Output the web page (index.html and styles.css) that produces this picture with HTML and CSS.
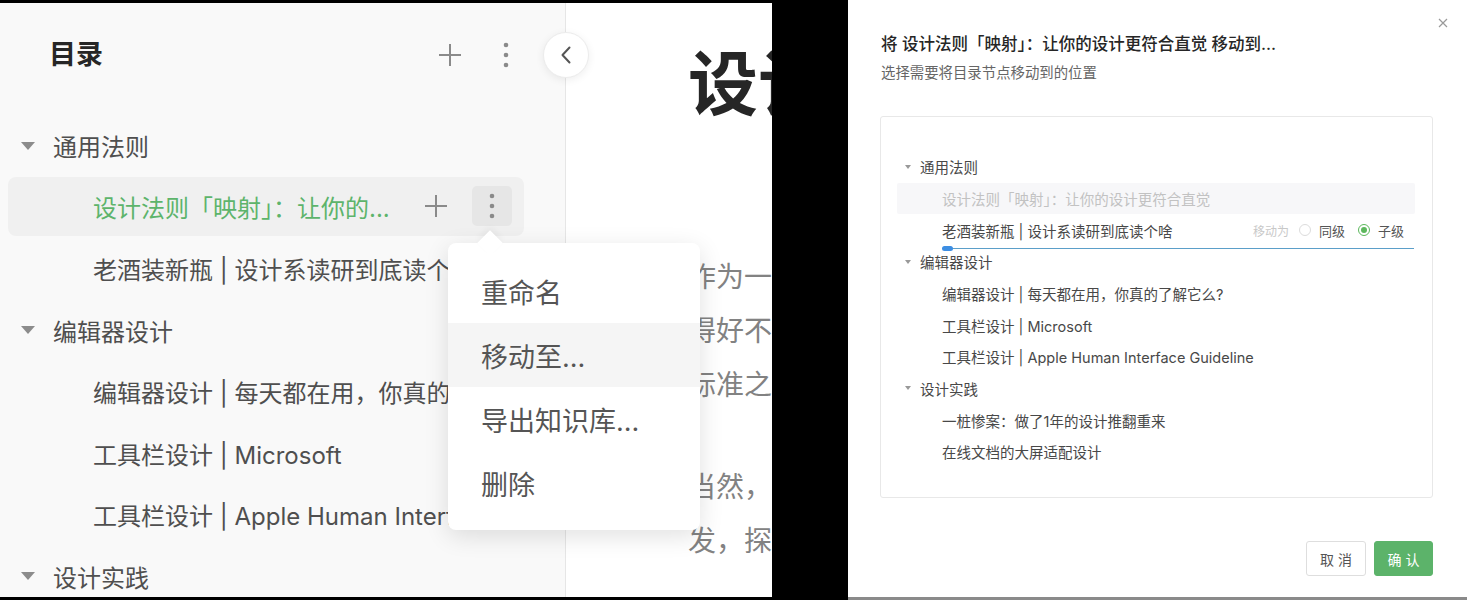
FILE: index.html
```html
<!DOCTYPE html>
<html lang="zh-CN">
<head>
<meta charset="utf-8">
<title>目录</title>
<link rel="stylesheet" href="styles.css">
</head>
<body>
<div class="screen">
  <div class="app">
    <aside class="sidebar">
      <header class="side-head">
        <h1 class="side-title">目录</h1>
        <div class="head-actions">
          <span class="icon-btn">
            <svg width="22" height="22" viewBox="0 0 22 22"><path d="M11 0v22M0 11h22" stroke="#8a8a8a" stroke-width="2" fill="none"/></svg>
          </span>
          <span class="icon-btn">
            <svg width="6" height="26" viewBox="0 0 6 26"><circle cx="3" cy="3" r="2.3" fill="#8a8a8a"/><circle cx="3" cy="13" r="2.3" fill="#8a8a8a"/><circle cx="3" cy="23" r="2.3" fill="#8a8a8a"/></svg>
          </span>
        </div>
      </header>
      <ul class="toc">
        <li class="toc-row group"><span class="caret"></span><span class="label">通用法则</span></li>
        <li class="toc-row child active">
          <span class="label">设计法则「映射」：让你的...</span>
          <span class="row-actions">
            <span class="icon-btn">
              <svg width="22" height="22" viewBox="0 0 22 22"><path d="M11 0v22M0 11h22" stroke="#8a8a8a" stroke-width="2" fill="none"/></svg>
            </span>
            <span class="more-btn">
              <svg width="6" height="26" viewBox="0 0 6 26"><circle cx="3" cy="3" r="2.3" fill="#8a8a8a"/><circle cx="3" cy="13" r="2.3" fill="#8a8a8a"/><circle cx="3" cy="23" r="2.3" fill="#8a8a8a"/></svg>
            </span>
          </span>
        </li>
        <li class="toc-row child"><span class="label">老酒装新瓶 | 设计系读研到底读个啥</span></li>
        <li class="toc-row group"><span class="caret"></span><span class="label">编辑器设计</span></li>
        <li class="toc-row child"><span class="label">编辑器设计 | 每天都在用，你真的了解它么?</span></li>
        <li class="toc-row child"><span class="label">工具栏设计 | Microsoft</span></li>
        <li class="toc-row child"><span class="label">工具栏设计 | Apple Human Interface Guideline</span></li>
        <li class="toc-row group"><span class="caret"></span><span class="label">设计实践</span></li>
      </ul>
    </aside>
    <main class="content">
      <h2 class="doc-title">设计法则「映射」：让你的设计更符合直觉</h2>
      <div class="doc-para">
        <div class="line">作为一名设计师，我们常常会被问到</div>
        <div class="line">得好不好，有没有一个可以衡量的</div>
        <div class="line">标准之类的问题。</div>
      </div>
      <div class="doc-para">
        <div class="line">当然，我们可以从很多角度出</div>
        <div class="line">发，探讨设计的好坏。</div>
      </div>
    </main>
    <button class="collapse-btn" type="button">
      <svg width="12" height="18" viewBox="0 0 12 18"><path d="M9.5 1.5L2.5 9l7 7.5" stroke="#555" stroke-width="2" fill="none" stroke-linecap="round" stroke-linejoin="round"/></svg>
    </button>
    <div class="menu">
      <div class="menu-item">重命名</div>
      <div class="menu-item hover">移动至...</div>
      <div class="menu-item">导出知识库...</div>
      <div class="menu-item">删除</div>
    </div>
  </div>
  <div class="gap"></div>
  <section class="modal">
    <span class="close">
      <svg width="10" height="10" viewBox="0 0 10 10"><path d="M1 1l8 8M9 1l-8 8" stroke="#9a9a9a" stroke-width="1.2" fill="none"/></svg>
    </span>
    <h3 class="modal-title">将 设计法则「映射」：让你的设计更符合直觉 移动到...</h3>
    <p class="modal-sub">选择需要将目录节点移动到的位置</p>
    <div class="tree">
      <div class="t-row group"><span class="t-caret"></span>通用法则</div>
      <div class="t-row child current">设计法则「映射」：让你的设计更符合直觉</div>
      <div class="t-row child target">
        <span>老酒装新瓶 | 设计系读研到底读个啥</span>
        <span class="move-as">
          <span class="move-label">移动为</span>
          <span class="radio"></span><span class="radio-text">同级</span>
          <span class="radio checked"></span><span class="radio-text">子级</span>
        </span>
        <span class="drop-line"><span class="drop-dot"></span></span>
      </div>
      <div class="t-row group"><span class="t-caret"></span>编辑器设计</div>
      <div class="t-row child">编辑器设计 | 每天都在用，你真的了解它么?</div>
      <div class="t-row child">工具栏设计 | Microsoft</div>
      <div class="t-row child">工具栏设计 | Apple Human Interface Guideline</div>
      <div class="t-row group"><span class="t-caret"></span>设计实践</div>
      <div class="t-row child">一桩惨案：做了1年的设计推翻重来</div>
      <div class="t-row child">在线文档的大屏适配设计</div>
    </div>
    <div class="modal-foot">
      <button class="btn btn-cancel" type="button">取消</button>
      <button class="btn btn-ok" type="button">确认</button>
    </div>
  </section>
</div>
</body>
</html>
```

FILE: styles.css
```css
* { box-sizing: border-box; }

html, body {
  margin: 0;
  padding: 0;
  background: #000;
}

body {
  width: 1467px;
  height: 600px;
  overflow: hidden;
  font-family: Inter, "Noto Sans CJK SC", sans-serif;
}

.screen {
  display: flex;
  width: 1467px;
  height: 600px;
}

/* ---------- left app ---------- */
.app {
  position: relative;
  width: 772px;
  height: 594px;
  margin-top: 3px;
  background: #fff;
  display: flex;
  overflow: hidden;
}

.sidebar {
  width: 566px;
  flex: none;
  background: #f9f9f9;
  border-right: 1px solid #e6e6e6;
  overflow: hidden;
}

.side-head {
  display: flex;
  align-items: center;
  justify-content: space-between;
  height: 72px;
  padding: 32px 43px 0 49px;
}

.side-title {
  margin: 0;
  font-size: 27px;
  line-height: 40px;
  font-weight: 600;
  color: #262626;
}

.head-actions {
  display: flex;
  align-items: center;
  gap: 24px;
}

.icon-btn {
  width: 32px;
  height: 32px;
  display: flex;
  align-items: center;
  justify-content: center;
}

.toc {
  list-style: none;
  margin: 0;
  padding: 40px 0 0;
}

.toc-row {
  height: 61.5px;
  margin: 0 8px;
  display: flex;
  align-items: center;
  font-size: 24px;
  color: #4f4f4f;
  white-space: nowrap;
  overflow: hidden;
}

.toc-row.group {
  padding-left: 13px;
}

.toc-row.child {
  padding-left: 85px;
}

.caret {
  width: 0;
  height: 0;
  border-left: 7px solid transparent;
  border-right: 7px solid transparent;
  border-top: 8px solid #8c8c8c;
  margin-right: 18px;
  flex: none;
}

.toc-row.active {
  margin-right: 41px;
  background: #f0f0f0;
  border-radius: 8px;
  padding-right: 12px;
  height: 59px;
  margin-top: 0;
  margin-bottom: 2.5px;
}

.toc-row.active .label {
  color: #5db46b;
  flex: 1;
}

.row-actions {
  display: flex;
  align-items: center;
  gap: 20px;
}

.more-btn {
  width: 40px;
  height: 40px;
  border-radius: 5px;
  background: #e6e6e6;
  display: flex;
  align-items: center;
  justify-content: center;
}

.content {
  flex: 1;
  padding: 41px 0 0 122px;
  overflow: hidden;
}

.doc-title {
  margin: 0;
  font-size: 70px;
  line-height: 82px;
  font-weight: 700;
  color: #262626;
  white-space: nowrap;
}

.doc-para {
  margin-top: 48px;
  font-size: 28px;
  line-height: 54px;
  color: #828282;
  white-space: nowrap;
}

.doc-para:first-of-type {
  margin-top: 124px;
}

.collapse-btn {
  position: absolute;
  left: 543px;
  top: 29px;
  width: 46px;
  height: 46px;
  padding: 0;
  border-radius: 50%;
  border: 1px solid #ececec;
  background: #fff;
  box-shadow: 0 2px 8px rgba(0, 0, 0, 0.07);
  display: flex;
  align-items: center;
  justify-content: center;
}

.menu {
  position: absolute;
  left: 448px;
  top: 240px;
  width: 252px;
  height: 287px;
  padding: 16px 0 15px;
  background: #fff;
  border-radius: 8px;
  box-shadow: 0 6px 24px rgba(0, 0, 0, 0.12);
}

.menu::before {
  content: "";
  position: absolute;
  left: 33px;
  top: -9px;
  width: 18px;
  height: 18px;
  background: #fff;
  transform: rotate(45deg);
  box-shadow: -3px -3px 6px rgba(0, 0, 0, 0.04);
}

.menu-item {
  position: relative;
  height: 64px;
  padding-left: 33px;
  display: flex;
  align-items: center;
  font-size: 27px;
  color: #555;
}

.menu-item.hover {
  background: #f5f5f5;
}

.gap {
  width: 76px;
  flex: none;
}

/* ---------- modal ---------- */
.modal {
  position: relative;
  width: 619px;
  height: 600px;
  flex: none;
  background: #fff;
  border-bottom: 3px solid #8a8a8a;
  padding: 32px 34px 0 32px;
}

.close {
  position: absolute;
  right: 19px;
  top: 18px;
  display: flex;
}

.modal-title {
  margin: 0;
  padding-left: 1px;
  font-size: 16.5px;
  line-height: 24px;
  font-weight: 500;
  color: #262626;
  white-space: nowrap;
}

.modal-sub {
  margin: 7px 0 0;
  padding-left: 1px;
  font-size: 14.4px;
  line-height: 20px;
  color: #666;
}

.tree {
  margin-top: 33px;
  height: 382px;
  border: 1px solid #e8e8e8;
  border-radius: 3px;
  padding: 34px 17px 0 16px;
}

.t-row {
  position: relative;
  height: 31.67px;
  display: flex;
  align-items: center;
  font-size: 14.5px;
  color: #484848;
  white-space: nowrap;
}

.t-row.group {
  padding-left: 8px;
}

.t-row.child {
  padding-left: 45px;
}

.t-caret {
  width: 0;
  height: 0;
  border-left: 3.5px solid transparent;
  border-right: 3.5px solid transparent;
  border-top: 4px solid #999;
  margin-right: 9px;
}

.t-row.current {
  background: #f7f7f9;
  color: #c2c2c2;
  border-radius: 2px;
}

.t-row.target {
  justify-content: space-between;
  padding-right: 11px;
}

.move-as {
  display: flex;
  align-items: center;
}

.move-label {
  font-size: 12px;
  color: #c8c8c8;
  margin-right: 10px;
}

.radio {
  width: 12px;
  height: 12px;
  border-radius: 50%;
  border: 1px solid #dcdcdc;
  margin-right: 8px;
  display: flex;
  align-items: center;
  justify-content: center;
}

.radio.checked {
  border-color: #5cb85c;
}

.radio.checked::after {
  content: "";
  width: 6px;
  height: 6px;
  border-radius: 50%;
  background: #5cb85c;
}

.radio-text {
  font-size: 13px;
  color: #555;
  margin-right: 13px;
}

.radio-text:last-child {
  margin-right: 0;
}

.drop-line {
  position: absolute;
  left: 45px;
  right: 1px;
  bottom: -3px;
  height: 1px;
  background: #5b9fc9;
}

.drop-dot {
  position: absolute;
  left: 0;
  top: -2px;
  width: 11px;
  height: 5px;
  border-radius: 3px;
  background: #3d8ee3;
}

.modal-foot {
  display: flex;
  justify-content: flex-end;
  gap: 8px;
  margin-top: 43px;
}

.btn {
  height: 35px;
  padding: 0;
  border-radius: 3px;
  font-family: inherit;
  font-size: 14px;
  letter-spacing: 4px;
  text-indent: 4px;
}

.btn-cancel {
  width: 60px;
  border: 1px solid #dedede;
  background: #fff;
  color: #555;
}

.btn-ok {
  width: 59px;
  border: 1px solid #5cb36a;
  background: #5cb36a;
  color: #fff;
}
```
